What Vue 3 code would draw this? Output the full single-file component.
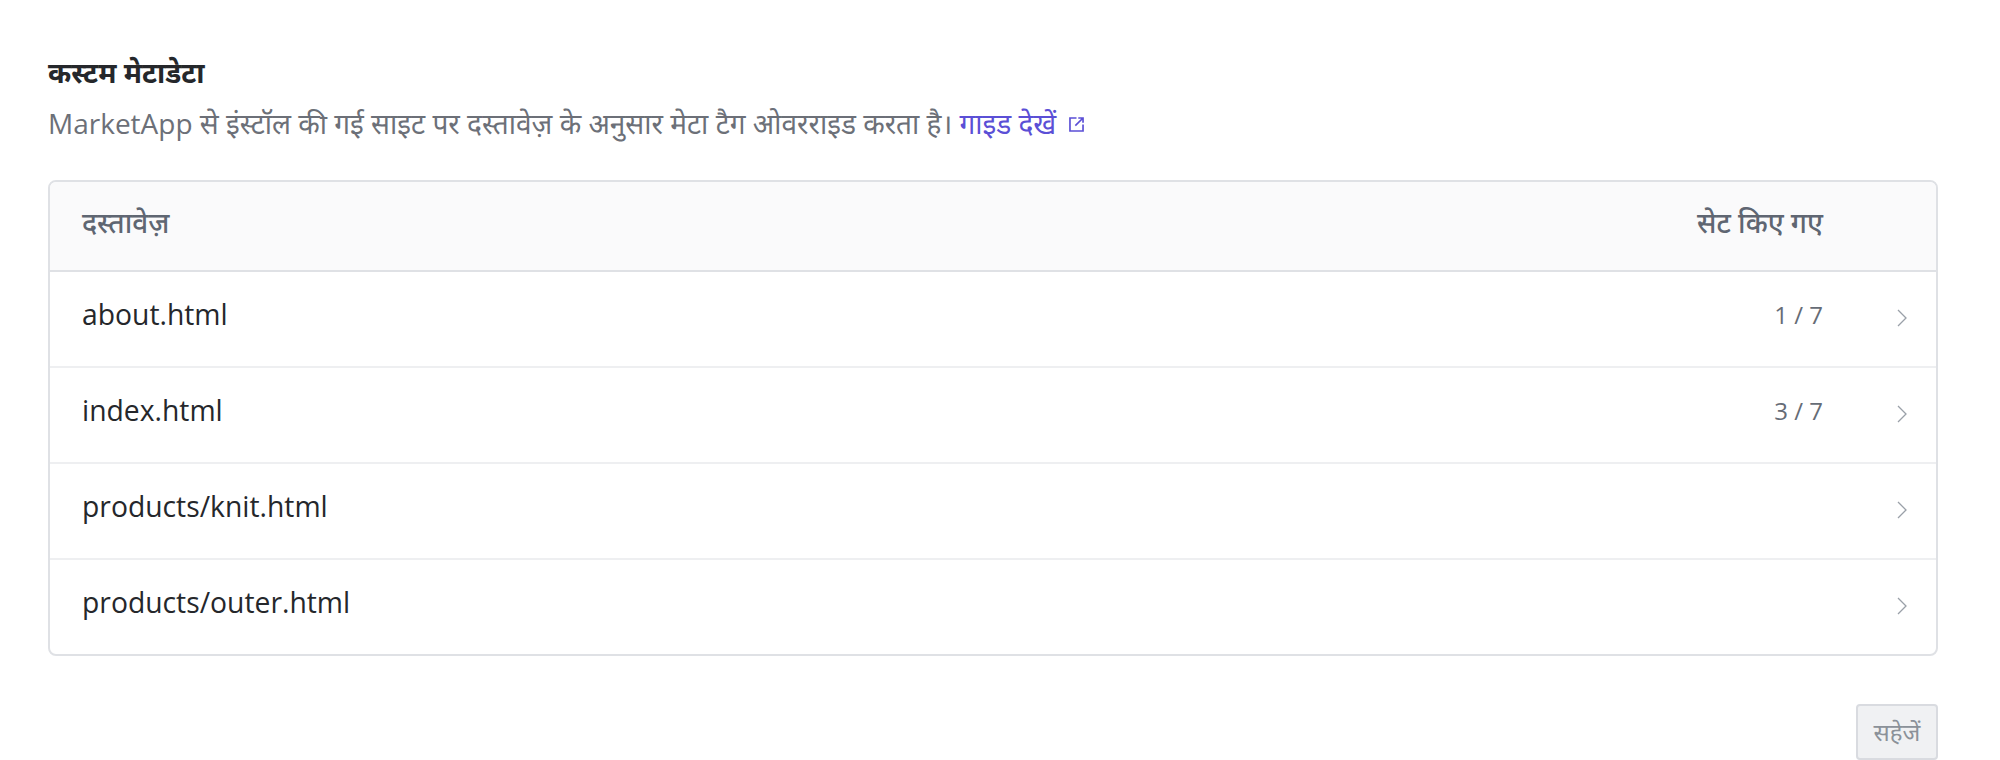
<template>
  <div class="page">
    <h2 class="title">कस्टम मेटाडेटा</h2>
    <p class="desc">
      MarketApp से इंस्टॉल की गई साइट पर दस्तावेज़ के अनुसार मेटा टैग ओवरराइड करता है।
      <a class="guide" href="#">गाइड देखें
        <svg class="ext" viewBox="0 0 16 16" fill="none" stroke="currentColor" stroke-width="1.4">
          <path d="M8 2.5H2.5v11h11V8" />
          <path d="M7 9l6.5-6.5M9.5 2.5h4v4" />
        </svg>
      </a>
    </p>

    <div class="table">
      <div class="head">
        <span class="col-name">दस्तावेज़</span>
        <span class="col-count">सेट किए गए</span>
      </div>
      <div v-for="doc in docs" :key="doc.name" class="row">
        <span class="col-name">{{ doc.name }}</span>
        <span class="col-count">{{ doc.count }}</span>
        <svg class="chevron" viewBox="0 0 12 20" fill="none" stroke="currentColor" stroke-width="1.3">
          <path d="M2 2l8 8-8 8" />
        </svg>
      </div>
    </div>

    <div class="actions">
      <button class="save" disabled>सहेजें</button>
    </div>
  </div>
</template>

<script setup>
const docs = [
  { name: 'about.html', count: '1 / 7' },
  { name: 'index.html', count: '3 / 7' },
  { name: 'products/knit.html', count: '' },
  { name: 'products/outer.html', count: '' }
]
</script>

<style>
html, body {
  margin: 0;
  background: #fff;
}
</style>

<style scoped>
.page {
  width: 1890px;
  padding: 52px 62px 0 48px;
  font-family: "Open Sans", "Noto Sans", "DejaVu Sans", sans-serif;
}

.title {
  margin: 0;
  font-size: 28px;
  line-height: 40px;
  font-weight: 700;
  color: #25272b;
}

.desc {
  margin: 11px 0 0;
  font-size: 28px;
  line-height: 40px;
  color: #6c7078;
}

.guide {
  color: #5b4fd6;
  text-decoration: none;
}

.ext {
  width: 19px;
  height: 19px;
  margin-left: 4px;
}

.table {
  margin-top: 37px;
  border: 2px solid #dfe1e5;
  border-radius: 8px;
  overflow: hidden;
}

.head {
  display: flex;
  align-items: center;
  height: 80px;
  padding: 0 113px 8px 32px;
  background: #fafafb;
  border-bottom: 2px solid #dfe1e5;
  font-size: 28px;
  font-weight: 500;
  color: #5f6672;
}

.head .col-name {
  flex: 1;
}

.row {
  position: relative;
  display: flex;
  align-items: center;
  height: 84px;
  padding: 0 113px 10px 32px;
  border-bottom: 2px solid #eeeff1;
  font-size: 28.3px;
  color: #25272b;
}

.row:last-child {
  border-bottom: 0;
}

.row .col-name {
  flex: 1;
}

.row .col-count {
  font-size: 24px;
  color: #666c76;
}

.chevron {
  position: absolute;
  right: 28px;
  top: 36px;
  width: 12px;
  height: 20px;
  color: #9aa0a8;
}

.actions {
  display: flex;
  justify-content: flex-end;
  margin-top: 48px;
}

.save {
  width: 82px;
  height: 56px;
  padding: 0 0 2px;
  border: 2px solid #d9dbe0;
  border-radius: 4px;
  background: #f0f1f3;
  font-family: inherit;
  font-size: 24px;
  color: #8b9199;
}
</style>
